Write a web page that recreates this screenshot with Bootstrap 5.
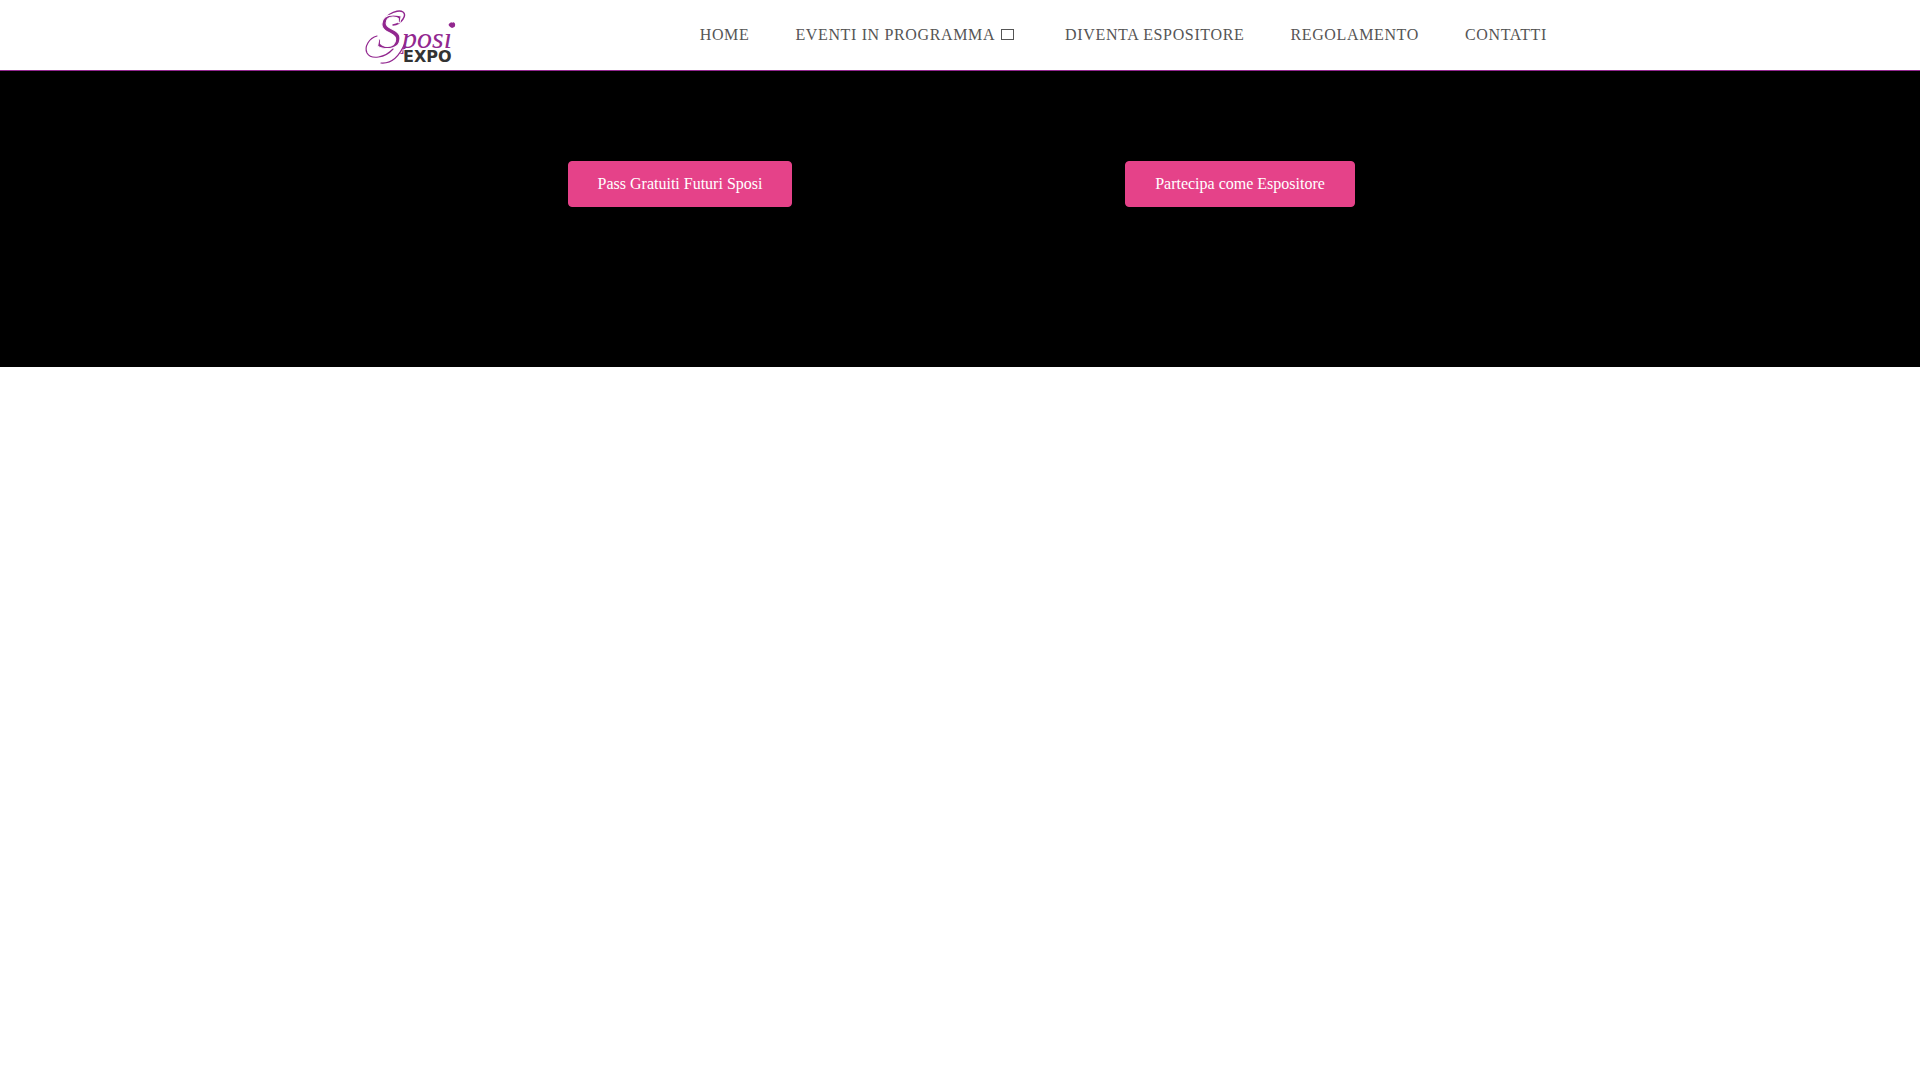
<!DOCTYPE html>
<html lang="it">
<head>
<meta charset="utf-8">
<meta name="viewport" content="width=device-width, initial-scale=1">
<title>Sposi Expo</title>
<link href="https://cdn.jsdelivr.net/npm/bootstrap@5.3.0/dist/css/bootstrap.min.css" rel="stylesheet">
<style>
  body { font-family: "Liberation Serif", "Times New Roman", serif; background: #fff; }
  .site-header { border-bottom: 1px solid #92278f; min-height: 71px; }
  .site-width { max-width: 1200px; }
  .site-menu { gap: 46px; padding-right: 13px; }
  .navbar .site-menu .nav-link { color: #555; font-size: 16px; line-height: 24px; letter-spacing: .04em; text-transform: uppercase; padding: 0; }
  .navbar .site-menu .nav-link:hover { color: #92278f; }
  .submenu-mark { display: inline-block; width: 13px; height: 11px; border: 1px solid #555; margin-left: 6px; margin-right: 5px; }
  .hero { padding: 90px 0 160px; }
  .hero-width { max-width: 1120px; }
  .btn-pink { --bs-btn-color: #fff; --bs-btn-bg: #e54289; --bs-btn-border-color: #e54289; --bs-btn-hover-color: #fff; --bs-btn-hover-bg: #cf3577; --bs-btn-hover-border-color: #cf3577;
    --bs-btn-border-radius: 4px; --bs-btn-padding-x: 29px; --bs-btn-padding-y: 10px; --bs-btn-font-size: 16px; --bs-btn-line-height: 24px; }
</style>
</head>
<body>
<header class="site-header d-flex bg-white">
  <nav class="navbar navbar-expand site-width container-fluid p-0" aria-label="Menu principale">
    <a class="navbar-brand p-0 m-0" href="#">
      <svg class="d-block" width="104" height="70" viewBox="0 0 104 70" role="img" aria-label="Sposi Expo">
        <g fill="none" stroke="#92278f" stroke-linecap="round">
          <path stroke-width="1.2" d="M17 36 C9 38 4 47 7 53 C11 60 25 58 33 49"/>
          <path stroke-width="1.4" d="M23 27 C20 17 37 8 43 12 C47 15 42 24 33 25"/>
          <path stroke-width="1.2" d="M45 43 C40 55 33 64 21 63"/>
        </g>
        <text fill="#92278f" font-family="Liberation Serif, serif" font-style="italic" x="17" y="48" font-size="30"><tspan font-size="50" stroke="#fff" stroke-width="1">S</tspan><tspan>posı</tspan></text>
        <path fill="#92278f" d="M92 28 C88 26 88 24 90 23 C91 22 92 22 92 23 C93 21 96 23 95 26 C95 27 94 27 92 28Z"/>
        <text x="43" y="62" font-family="DejaVu Sans, sans-serif" font-weight="700" font-size="16" fill="#333" stroke="#fff" stroke-width="2" paint-order="stroke">EXPO</text>
      </svg>
    </a>
    <ul class="navbar-nav site-menu ms-auto">
      <li class="nav-item"><a class="nav-link" href="#">Home</a></li>
      <li class="nav-item"><a class="nav-link" href="#">Eventi in programma<span class="submenu-mark" aria-hidden="true"></span></a></li>
      <li class="nav-item"><a class="nav-link" href="#">Diventa espositore</a></li>
      <li class="nav-item"><a class="nav-link" href="#">Regolamento</a></li>
      <li class="nav-item"><a class="nav-link" href="#">Contatti</a></li>
    </ul>
  </nav>
</header>
<main class="hero bg-black">
  <div class="container-fluid hero-width p-0">
    <div class="row g-0 text-center">
      <div class="col"><a class="btn btn-pink" href="#">Pass Gratuiti Futuri Sposi</a></div>
      <div class="col"><a class="btn btn-pink" href="#">Partecipa come Espositore</a></div>
    </div>
  </div>
</main>
<script src="https://cdn.jsdelivr.net/npm/bootstrap@5.3.0/dist/js/bootstrap.bundle.min.js"></script>
</body>
</html>
